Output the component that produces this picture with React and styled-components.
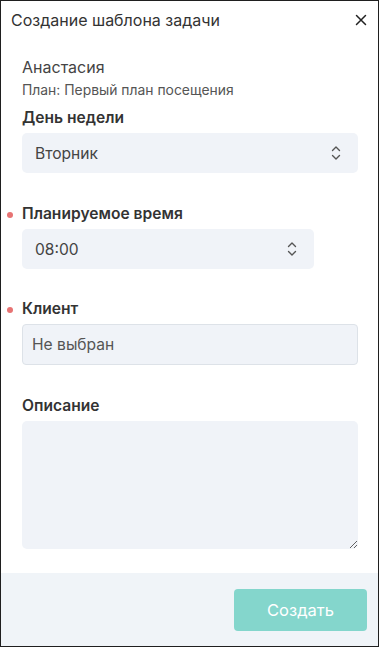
import React from "react";
import styled, { createGlobalStyle } from "styled-components";

const Global = createGlobalStyle`
  html, body { margin: 0; padding: 0; background: #fff; }
  body { font-family: Inter, "Noto Sans", sans-serif; }
  * { box-sizing: border-box; }
`;

const Dialog = styled.div`
  width: 379px;
  height: 647px;
  border: 1px solid #1f1f1f;
  display: flex;
  flex-direction: column;
  background: #fff;
  overflow: hidden;
`;

const Header = styled.div`
  height: 38px;
  display: flex;
  align-items: center;
  justify-content: space-between;
  padding: 0 11px 0 10px;
`;

const Title = styled.div`
  font-size: 16px;
  color: #333;
`;

const Close = styled.button`
  border: 0;
  background: none;
  padding: 0;
  width: 12px;
  height: 12px;
  display: flex;
  cursor: pointer;
`;

const Body = styled.div`
  flex: 1;
  padding: 18px 20px 0 21px;
  display: flex;
  flex-direction: column;
`;

const Name = styled.div`
  font-size: 16px;
  color: #444;
  line-height: 20px;
`;

const Plan = styled.div`
  font-size: 13.9px;
  color: #555;
  line-height: 18px;
  margin-top: 4px;
`;

const Field = styled.div`
  margin-top: ${(p) => p.$gap}px;
  display: flex;
  flex-direction: column;
`;

const Label = styled.div`
  position: relative;
  font-size: 15.6px;
  font-weight: 600;
  color: #333;
  line-height: 20px;
  margin-bottom: 5px;
  ${(p) =>
    p.$required &&
    `
    &::before {
      content: "";
      position: absolute;
      left: -15px;
      top: 8px;
      width: 6px;
      height: 6px;
      border-radius: 50%;
      background: #e77373;
    }
  `}
`;

const Select = styled.div`
  width: ${(p) => p.$width}px;
  height: 40px;
  background: #f0f3f8;
  border-radius: 5px;
  display: flex;
  align-items: center;
  justify-content: space-between;
  padding: 0 17px 0 13px;
  font-size: 15.6px;
  color: #444;
`;

const Input = styled.div`
  width: 336px;
  height: 41px;
  background: #f0f3f8;
  border: 1px solid #dde2e8;
  border-radius: 4px;
  display: flex;
  align-items: center;
  padding: 0 9px;
  font-size: 15.6px;
  color: #555;
`;

const TextArea = styled.textarea`
  width: 336px;
  height: 128px;
  background: #f0f3f8;
  border: 0;
  border-radius: 5px;
  resize: vertical;
  outline: none;
  font-family: inherit;
  font-size: 15px;
  padding: 10px;
  display: block;
`;

const Footer = styled.div`
  height: 73px;
  background: #f0f4f8;
  display: flex;
  align-items: center;
  justify-content: flex-end;
  padding: 0 11px 0 0;
`;

const Button = styled.button`
  width: 133px;
  height: 42px;
  border: 0;
  border-radius: 4px;
  background: #84d6cc;
  color: #fff;
  font-family: inherit;
  font-size: 16.5px;
`;

const Chevrons = () => (
  <svg width="10" height="16" viewBox="0 0 10 16" fill="none" stroke="#555" strokeWidth="1.4" strokeLinecap="round" strokeLinejoin="round">
    <path d="M1.5 5.5 L5 2 L8.5 5.5" />
    <path d="M1.5 10.5 L5 14 L8.5 10.5" />
  </svg>
);

export default function App() {
  return (
    <>
      <Global />
      <Dialog>
        <Header>
          <Title>Создание шаблона задачи</Title>
          <Close aria-label="close">
            <svg width="12" height="12" viewBox="0 0 12 12" stroke="#222" strokeWidth="1.5" strokeLinecap="round">
              <path d="M1.5 1.5 L10.5 10.5 M10.5 1.5 L1.5 10.5" />
            </svg>
          </Close>
        </Header>
        <Body>
          <Name>Анастасия</Name>
          <Plan>План: Первый план посещения</Plan>
          <Field $gap={9}>
            <Label>День недели</Label>
            <Select $width={336}>
              <span>Вторник</span>
              <Chevrons />
            </Select>
          </Field>
          <Field $gap={31}>
            <Label $required>Планируемое время</Label>
            <Select $width={292}>
              <span>08:00</span>
              <Chevrons />
            </Select>
          </Field>
          <Field $gap={30}>
            <Label $required>Клиент</Label>
            <Input>Не выбран</Input>
          </Field>
          <Field $gap={31}>
            <Label>Описание</Label>
            <TextArea />
          </Field>
        </Body>
        <Footer>
          <Button>Создать</Button>
        </Footer>
      </Dialog>
    </>
  );
}
